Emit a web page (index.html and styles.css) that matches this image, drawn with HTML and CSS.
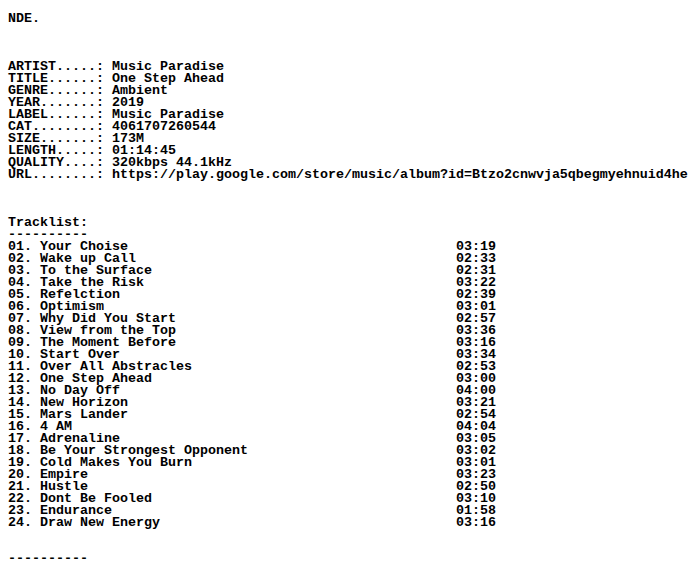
FILE: index.html
```html
<!DOCTYPE html>
<html>
<head>
<meta charset="utf-8">
<link rel="stylesheet" href="styles.css">
</head>
<body>
<pre class="nfo">NDE.



ARTIST.....: Music Paradise
TITLE......: One Step Ahead
GENRE......: Ambient
YEAR.......: 2019
LABEL......: Music Paradise
CAT........: 4061707260544
SIZE.......: 173M
LENGTH.....: 01:14:45
QUALITY....: 320kbps 44.1kHz
URL........: https://play.google.com/store/music/album?id=Btzo2cnwvja5qbegmyehnuid4he



Tracklist:
----------
01. Your Choise                                         03:19
02. Wake up Call                                        02:33
03. To the Surface                                      02:31
04. Take the Risk                                       03:22
05. Refelction                                          02:39
06. Optimism                                            03:01
07. Why Did You Start                                   02:57
08. View from the Top                                   03:36
09. The Moment Before                                   03:16
10. Start Over                                          03:34
11. Over All Abstracles                                 02:53
12. One Step Ahead                                      03:00
13. No Day Off                                          04:00
14. New Horizon                                         03:21
15. Mars Lander                                         02:54
16. 4 AM                                                04:04
17. Adrenaline                                          03:05
18. Be Your Strongest Opponent                          03:02
19. Cold Makes You Burn                                 03:01
20. Empire                                              03:23
21. Hustle                                              02:50
22. Dont Be Fooled                                      03:10
23. Endurance                                           01:58
24. Draw New Energy                                     03:16


----------</pre>
</body>
</html>
```

FILE: styles.css
```css
html, body {
  background: #ffffff;
}
body {
  margin: 0;
  padding: 13px 8px 0 8px;
  overflow: hidden;
}
.nfo {
  margin: 0;
  font-family: "Liberation Mono", "DejaVu Sans Mono", monospace;
  font-weight: bold;
  font-size: 13.333px;
  line-height: 12px;
  color: #000000;
  white-space: pre;
}
```
